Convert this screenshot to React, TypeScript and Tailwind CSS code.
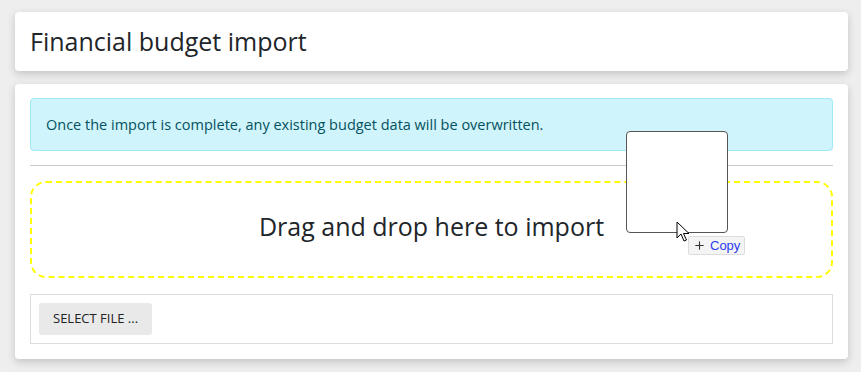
import { Plus } from 'lucide-react';

const font = { fontFamily: '"Open Sans", "Noto Sans", sans-serif' };

function DragGhost() {
  return (
    <div className="pointer-events-none absolute left-[611px] top-[47px]">
      <div className="w-[102px] h-[102px] rounded-[4px] border border-[#555] bg-white" />
      <svg
        className="absolute left-[50px] top-[90px]"
        width="14"
        height="22"
        viewBox="0 0 14 22"
      >
        <path
          d="M1 1 L1 17 L5 13 L8 20 L10.5 19 L7.5 12.5 L13 12.5 Z"
          fill="white"
          stroke="black"
          strokeWidth="1"
          strokeLinejoin="miter"
        />
      </svg>
      <div
        className="absolute left-[62px] top-[105px] flex items-center gap-[4px] h-[19px] px-[4px] rounded-[2px] border border-[#dcdcdc] bg-[#f4f4f4] text-[13px] text-[#2a3df0]"
        style={{ fontFamily: '"Liberation Sans", sans-serif' }}
      >
        <Plus className="w-[13px] h-[13px] text-[#333]" strokeWidth={2} />
        <span>Copy</span>
      </div>
    </div>
  );
}

export default function App() {
  return (
    <div className="min-h-[372px] bg-[#eeeeee] pl-[15px] pr-[13px] pt-[12px] pb-[12px] text-[#212529]" style={font}>
      <div className="h-[59px] rounded-[4px] bg-white shadow-[0_3px_8px_rgba(0,0,0,0.18)] flex items-center px-[15px]">
        <h1 className="text-[25px] leading-none">Financial budget import</h1>
      </div>

      <div className="relative mt-[13px] rounded-[4px] bg-white shadow-[0_3px_8px_rgba(0,0,0,0.18)] px-[15px] pt-[14px] pb-[15px]">
        <div className="h-[53px] flex items-center px-[15px] rounded-[4px] border border-[#9eeaf9] bg-[#cff4fc] text-[#055160] text-[14.5px]">
          Once the import is complete, any existing budget data will be overwritten.
        </div>

        <hr className="mt-[14px] border-0 h-px bg-[#cccccc]" />

        <div className="mt-[15px] h-[97px] pb-[6px] rounded-[16px] border-2 border-dashed border-[#ffff00] flex items-center justify-center">
          <span className="text-[25px] leading-none">Drag and drop here to import</span>
        </div>

        <div className="mt-[16px] h-[50px] border border-[#dddddd] flex items-center px-[8px]">
          <button
            className="h-[32px] px-[14px] rounded-[3px] bg-[#e9e9e9] text-[13px] text-[#222] uppercase"
            style={{ fontFamily: '"Open Sans", sans-serif' }}
          >
            Select file ...
          </button>
        </div>

        <DragGhost />
      </div>
    </div>
  );
}
